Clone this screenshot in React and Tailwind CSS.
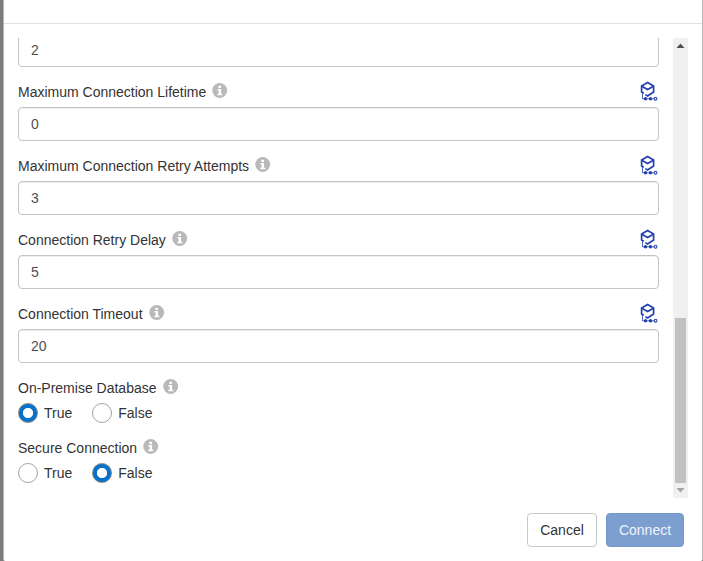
import React from "react";

function InfoIcon() {
  return (
    <svg className="mb-[3px] ml-[6px] h-4 w-4 shrink-0" viewBox="0 0 16 16">
      <circle cx="7.7" cy="7.5" r="7.4" fill="#b9b9b9" />
      <path d="M6.4 2.8H9V5H6.4zM5.4 6.1h3.7v4.6h1.3v1.5H5.3v-1.5h1.3V7.6H5.4z" fill="#fff" />
    </svg>
  );
}

function VariableIcon() {
  return (
    <svg className="mb-[2px] mr-[1px] h-5 w-[18px]" viewBox="0 0 18 20" fill="none" stroke="#2341ad" strokeWidth="1.7">
      <path d="M3.8 12.2 1.6 11V4.9L7.6 1.4l6 3.5V11l-6 4-2.2-1.4" />
      <path d="M1.8 5.2 7.6 8.6l5.8-3.4" />
      <path d="M2.5 11.8v6h11.5" strokeWidth="1" strokeOpacity="0.8" />
      <circle cx="5.5" cy="17.7" r="1.7" fill="#2341ad" stroke="none" />
      <circle cx="10.5" cy="17.7" r="1.7" fill="#2341ad" stroke="none" />
      <circle cx="15.5" cy="17.7" r="1.4" strokeWidth="1.1" />
    </svg>
  );
}

function TextBox({ value }) {
  return (
    <div className="flex h-[34px] shrink-0 items-center rounded-[4px] border border-[#c4c4c4] px-3 text-[#505050] shadow-[inset_0_1px_1px_rgba(0,0,0,0.07)]">
      {value}
    </div>
  );
}

function Field({ label, value }) {
  return (
    <div className="pt-[10px]">
      <div className="flex h-[30px] items-center justify-between">
        <div className="flex items-center">
          <span>{label}</span>
          <InfoIcon />
        </div>
        <VariableIcon />
      </div>
      <TextBox value={value} />
    </div>
  );
}

function Radio({ label, checked }) {
  return (
    <div className="flex items-center gap-[6px]">
      <span
        className={
          checked
            ? "h-5 w-5 rounded-full border border-[#8f8578] bg-[radial-gradient(circle,#fff_0_4.7px,#0572ce_5.5px)]"
            : "h-5 w-5 rounded-full border border-[#a3a3a3]"
        }
      />
      <span>{label}</span>
    </div>
  );
}

function RadioGroup({ label, value }) {
  return (
    <div className="h-[60px]">
      <div className="flex h-[30px] items-center">
        <span>{label}</span>
        <InfoIcon />
      </div>
      <div className="flex gap-5">
        <Radio label="True" checked={value} />
        <Radio label="False" checked={!value} />
      </div>
    </div>
  );
}

function Scrollbar() {
  return (
    <div className="flex w-[15px] flex-col items-center bg-[#f0f0f0]">
      <svg className="h-[15px] w-[15px]" viewBox="0 0 15 15">
        <path d="M7.5 5.5 11.5 10h-8z" fill="#505050" />
      </svg>
      <div className="mt-[265px] h-[165px] w-[11px] bg-[#c1c1c1]" />
      <svg className="h-[15px] w-[15px]" viewBox="0 0 15 15">
        <path d="M3.5 5h8l-4 4.5z" fill="#a3a3a3" />
      </svg>
    </div>
  );
}

export default function App() {
  return (
    <div className="flex h-[561px] w-[703px] overflow-hidden bg-[#7b7b7b] pl-[3px] font-['Liberation_Sans',Arial,sans-serif] text-[14px] leading-5 text-[#333]">
      <div className="flex w-[700px] flex-col rounded-b-[2px] border-x border-[#b5b5b5] bg-white">
        <div className="h-6 shrink-0 border-b border-[#e0e0e0]" />
        <div className="mt-[14px] flex h-[460px] shrink-0 justify-between overflow-hidden pl-[14px] pr-[14px]">
          <div className="-mt-[5px] w-[641px]">
            <TextBox value="2" />
            <Field label="Maximum Connection Lifetime" value="0" />
            <Field label="Maximum Connection Retry Attempts" value="3" />
            <Field label="Connection Retry Delay" value="5" />
            <Field label="Connection Timeout" value="20" />
            <div className="pt-[10px]">
              <RadioGroup label="On-Premise Database" value={true} />
              <RadioGroup label="Secure Connection" value={false} />
            </div>
          </div>
          <Scrollbar />
        </div>
        <div className="mt-[15px] flex justify-end gap-[9px] pr-[18px]">
          <button className="h-[34px] w-[70px] rounded-[4px] border border-[#c8c8c8] bg-white text-[#333]">
            Cancel
          </button>
          <button className="h-[34px] w-[78px] rounded-[4px] border border-[#7497c9] bg-[#7c9fd0] text-[#eef3fa]">
            Connect
          </button>
        </div>
      </div>
    </div>
  );
}
